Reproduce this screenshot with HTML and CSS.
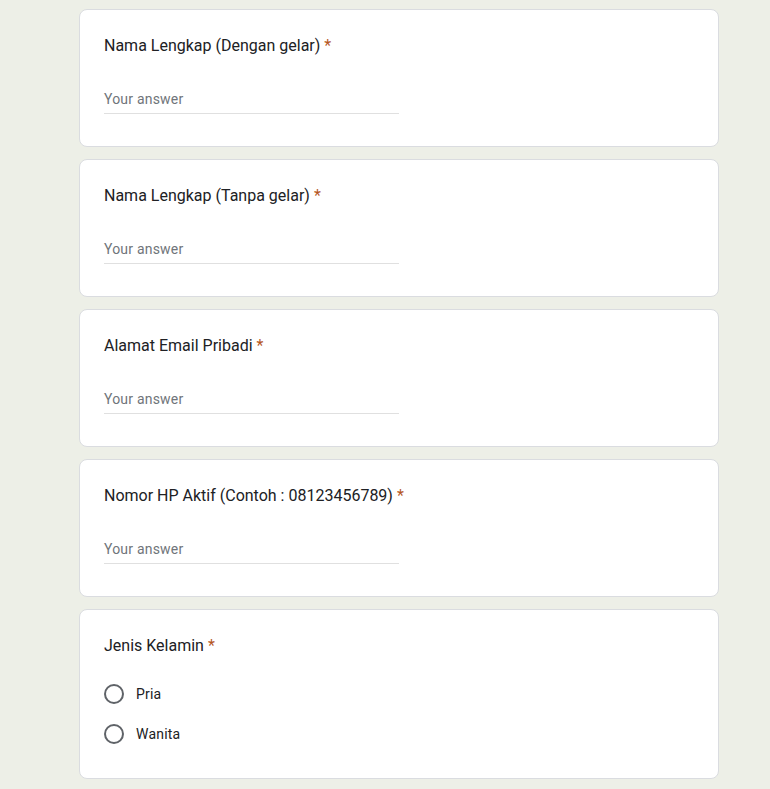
FILE: index.html
```html
<!DOCTYPE html>
<html>
<head>
<meta charset="utf-8">
<link rel="stylesheet" href="styles.css">
</head>
<body>
<div class="form">
  <div class="card">
    <div class="q-title">Nama Lengkap (Dengan gelar) <span class="req">*</span></div>
    <div class="answer"><span>Your answer</span></div>
  </div>
  <div class="card">
    <div class="q-title">Nama Lengkap (Tanpa gelar) <span class="req">*</span></div>
    <div class="answer"><span>Your answer</span></div>
  </div>
  <div class="card">
    <div class="q-title">Alamat Email Pribadi <span class="req">*</span></div>
    <div class="answer"><span>Your answer</span></div>
  </div>
  <div class="card">
    <div class="q-title">Nomor HP Aktif (Contoh : 08123456789) <span class="req">*</span></div>
    <div class="answer"><span>Your answer</span></div>
  </div>
  <div class="card">
    <div class="q-title radio-title">Jenis Kelamin <span class="req">*</span></div>
    <div class="radio-row"><span class="radio"></span><span class="radio-label">Pria</span></div>
    <div class="radio-row"><span class="radio"></span><span class="radio-label">Wanita</span></div>
  </div>
</div>
</body>
</html>
```

FILE: styles.css
```css
html, body {
  margin: 0;
  padding: 0;
  background: #edefe7;
  font-family: Roboto, "Liberation Sans", Arial, sans-serif;
  color: #202124;
}
.form {
  width: 640px;
  margin-left: 79px;
  padding-top: 9px;
  display: flex;
  flex-direction: column;
  gap: 12px;
}
.card {
  background: #fff;
  border: 1px solid #dadce0;
  border-radius: 8px;
  padding: 24px;
}
.q-title {
  font-size: 16px;
  line-height: 24px;
  color: #202124;
  margin-bottom: 28px;
}
.req {
  color: #b5571f;
}
.answer {
  width: 295px;
  height: 28px;
  box-sizing: border-box;
  padding-top: 5px;
  border-bottom: 1px solid #e0e0e0;
  margin-bottom: 8px;
  line-height: 16px;
}
.answer span {
  font-size: 14px;
  color: #70757a;
  letter-spacing: 0.2px;
}
.radio-title {
  margin-bottom: 16px;
}
.radio-row {
  height: 40px;
  display: flex;
  align-items: center;
  gap: 12px;
}
.radio {
  width: 16px;
  height: 16px;
  border: 2px solid #5f6368;
  border-radius: 50%;
}
.radio-label {
  font-size: 14px;
  letter-spacing: 0.2px;
  color: #202124;
}
```
